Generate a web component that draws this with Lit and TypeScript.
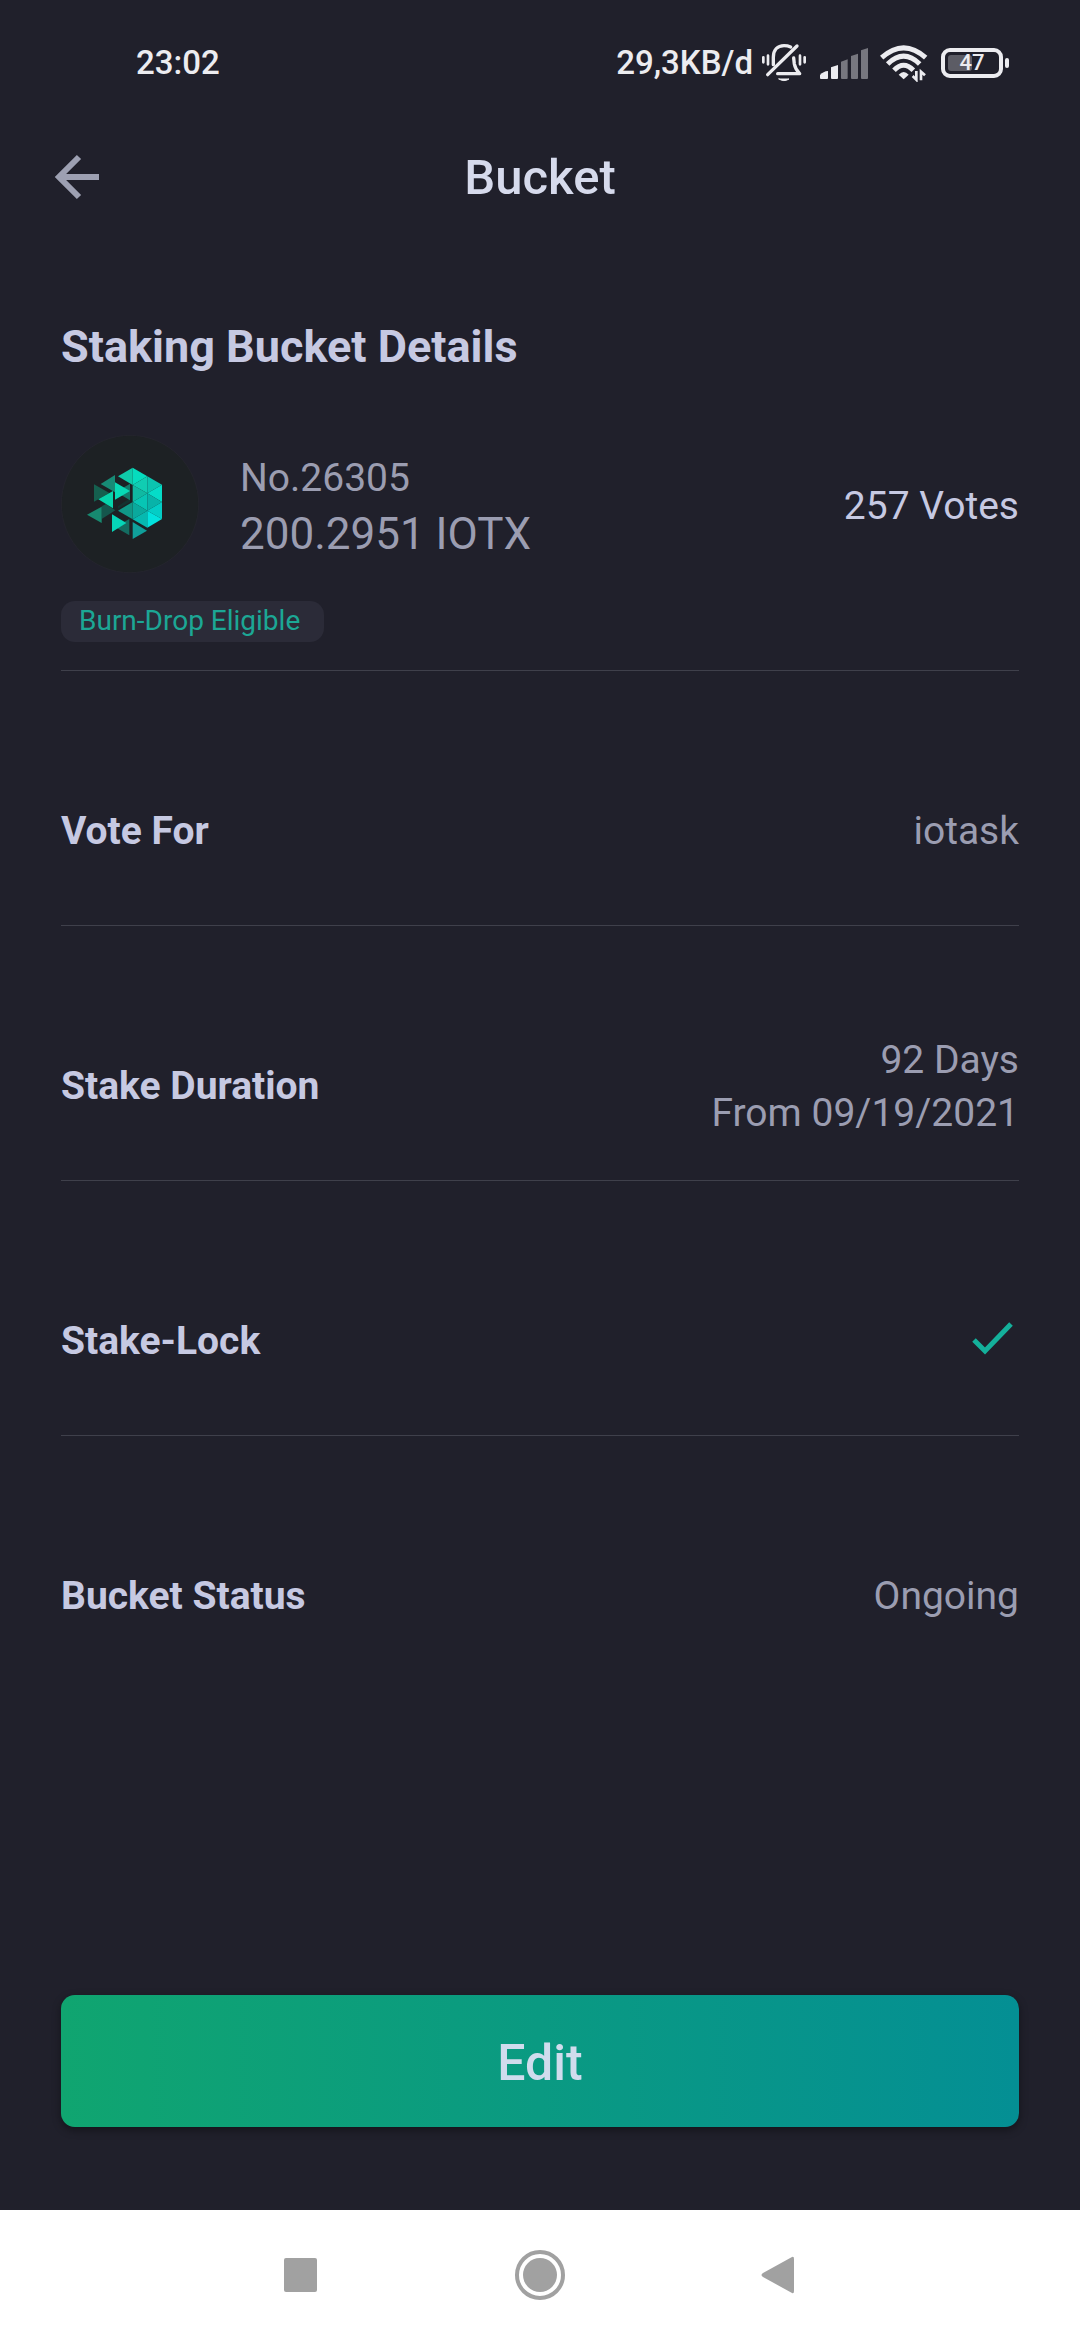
import { LitElement, html, svg, css, nothing, type TemplateResult } from "lit";
import { customElement, property } from "lit/decorators.js";

/* Facets of the token logo: polygon points and fill colour. */
const FACETS: [string, string][] = [
  ["204,243 240,220 240,231 204,251", "#14312f"],
  ["155,244 168,237 196,256 155,282", "#15564c"],
  ["132,178 178,204 132,230", "#15604f"],
  ["152,177 195,150 195,202", "#178b76"],
  ["240,176 240,226 198,201", "#127a6a"],
  ["195,172 240,198 195,224", "#07d9b5"],
  ["145,223 189,198 189,250", "#07d3ab"],
  ["111,269 155,245 155,294", "#178a70"],
  ["238,282 238,331 195,306", "#146c61"],
  ["186,268 229,294 186,321", "#06d5b8"],
  ["248,291 291,317 248,342", "#109f9a"],
  ["204,154 248,128 248,180", "#0fcbaa"],
  ["248,128 292,154 248,180", "#05dcbe"],
  ["292,154 292,205 248,180", "#10cdb2"],
  ["292,154 336,179 292,205", "#0bc5b0"],
  ["336,179 336,231 292,205", "#05dcc8"],
  ["248,180 292,205 248,231", "#10b9a2"],
  ["292,205 292,257 248,231", "#07c5b4"],
  ["292,205 336,231 292,257", "#08b3a9"],
  ["336,231 336,282 292,257", "#04cdc6"],
  ["248,231 292,257 248,283", "#0aa99d"],
  ["292,257 292,308 248,283", "#06b9b0"],
  ["292,257 336,282 292,308", "#02e2de"],
  ["204,257 248,231 248,283", "#109888"],
];

@customElement("status-bar")
export class StatusBar extends LitElement {
  static styles = css`
    :host {
      display: flex;
      align-items: center;
      justify-content: space-between;
      height: 126px;
      padding: 0 71px 0 136px;
      color: #ececf0;
      font-size: 33px;
      font-weight: 500;
      line-height: 40px;
    }
    .right {
      display: flex;
      align-items: center;
    }
    .bell {
      width: 46px;
      height: 40px;
      margin-left: 8px;
    }
    .signal {
      width: 48px;
      height: 31px;
      margin-left: 13px;
    }
    .wifi {
      width: 48px;
      height: 38px;
      margin-left: 12px;
    }
    .battery {
      position: relative;
      display: flex;
      align-items: center;
      justify-content: center;
      box-sizing: border-box;
      width: 62px;
      height: 30px;
      margin-left: 13px;
      border: 4px solid #ececf0;
      border-radius: 9px;
      font-size: 22px;
      line-height: 22px;
    }
    .level {
      position: absolute;
      left: 3px;
      top: 3px;
      bottom: 3px;
      width: 24px;
      border-radius: 3px;
      background: #5c5c65;
    }
    .percent {
      position: relative;
    }
    .nub {
      width: 4px;
      height: 10px;
      margin-left: 2px;
      border-radius: 2px;
      background: #ececf0;
    }
  `;

  render() {
    return html`
      <span>23:02</span>
      <div class="right">
        <span>29,3KB/d</span>
        <svg class="bell" viewBox="480 39 138 120" fill="none" stroke="#ececf0" stroke-width="10" stroke-linecap="round" aria-hidden="true">
          <path d="M500 134 588 48" />
          <path d="M517 104V82C517 60 530 47 549 47Q560 47 569 51" />
          <path d="M530 131H596Q583 118 580 102L578 84" stroke-linejoin="round" />
          <path d="M534 147H564Q549 157 534 147Z" fill="#ececf0" stroke-width="3" />
          <path d="M487 82V97M501 77V103M597 77V103M611 82V97" stroke-width="8" />
        </svg>
        <svg class="signal" viewBox="57 51 144 93" aria-hidden="true">
          <g fill="#ececf0">
            <path d="M57 141V132Q67 121 81 120V141Q81 144 78 144H60Q57 144 57 141Z" />
            <path d="M90 141V109L111 102V141Q111 144 108 144H93Q90 144 90 141Z" />
          </g>
          <g fill="#77777f">
            <path d="M120 141V92L140 85V141Q140 144 137 144H123Q120 144 120 141Z" />
            <path d="M150 141V75L171 68V141Q171 144 168 144H153Q150 144 150 141Z" />
            <path d="M180 141V58L201 51V141Q201 144 198 144H183Q180 144 180 141Z" />
          </g>
        </svg>
        <svg class="wifi" viewBox="238 42 144 114" fill="none" stroke="#ececf0" stroke-width="15" aria-hidden="true">
          <path d="M243 83Q309 24 375 83" />
          <path d="M261 102Q309 55 357 102" />
          <path d="M280 121Q309 91 338 121" />
          <path d="M294 134Q309 118 324 134L309 148Z" fill="#ececf0" stroke="none" />
          <path d="M347 123V149L336 138M361 151V125L373 136" stroke-width="8" />
        </svg>
        <div class="battery"><span class="level"></span><span class="percent">47</span></div>
        <span class="nub"></span>
      </div>
    `;
  }
}

@customElement("detail-row")
export class DetailRow extends LitElement {
  @property() label = "";
  @property({ attribute: false }) lines: string[] = [];
  @property({ type: Boolean }) checked = false;

  static styles = css`
    :host {
      display: flex;
      align-items: center;
      justify-content: space-between;
      box-sizing: border-box;
      min-height: 255px;
      padding-top: 67px;
      font-size: 39px;
      line-height: 53px;
      border-bottom: 1px solid #3f404b;
    }
    :host(:last-of-type) {
      border-bottom-color: transparent;
    }
    .label {
      color: #c6c9e2;
      font-weight: 700;
    }
    .value {
      color: #9b9db1;
      text-align: right;
    }
    .tick {
      display: block;
      width: 54px;
      height: 54px;
    }
  `;

  render() {
    return html`
      <span class="label">${this.label}</span>
      <div class="value">
        ${this.lines.map((line) => html`<div>${line}</div>`)}
        ${this.checked
          ? html`<svg class="tick" viewBox="0 0 54 54" fill="none" stroke="#14b09b" stroke-width="5" role="img" aria-label="Yes">
              <path d="M9 25 20 36 46 9" />
            </svg>`
          : nothing}
      </div>
    `;
  }
}

@customElement("app-root")
export class AppRoot extends LitElement {
  static styles = css`
    :host {
      display: flex;
      flex-direction: column;
      min-height: 100vh;
      background: #20202b;
      font-family: Roboto, "Liberation Sans", sans-serif;
    }
    button {
      padding: 0;
      border: 0;
      background: none;
      font-family: inherit;
      cursor: pointer;
    }
    svg {
      display: block;
    }
    .header {
      display: grid;
      grid-template-columns: 48px 1fr 48px;
      align-items: center;
      height: 104px;
      padding: 0 52px;
    }
    .back svg {
      width: 48px;
      height: 48px;
    }
    .title {
      margin: 0;
      color: #d6daec;
      font-size: 49px;
      font-weight: 500;
      line-height: 56px;
      text-align: center;
    }
    .content {
      display: flex;
      flex: 1;
      flex-direction: column;
      padding: 91px 61px 83px;
    }
    .heading {
      margin: 0;
      color: #c6c9e2;
      font-size: 45px;
      font-weight: 700;
      line-height: 52px;
    }
    .summary {
      display: flex;
      align-items: center;
      margin-top: 62px;
    }
    .logo {
      width: 138px;
      height: 138px;
    }
    .amounts {
      flex: 1;
      padding: 4px 0 0 41px;
      color: #9b9db1;
      font-size: 44px;
      line-height: 56px;
    }
    .number {
      font-size: 39px;
    }
    .votes {
      padding-top: 4px;
      color: #c6c9e2;
      font-size: 39px;
      line-height: 56px;
    }
    .tag-line {
      display: flex;
      padding: 28px 0;
      border-bottom: 1px solid #3f404b;
    }
    .tag {
      padding: 0 24px 2px 18px;
      border-radius: 14px;
      background: #2b2b38;
      color: #1ca795;
      font-size: 28px;
      line-height: 39px;
    }
    .edit {
      height: 132px;
      margin-top: auto;
      padding-top: 4px;
      border-radius: 14px;
      background: linear-gradient(90deg, #10a570, #048f94);
      box-shadow: 0 3px 8px rgba(0, 0, 0, 0.4);
      color: #d0dced;
      font-size: 50px;
      font-weight: 500;
    }
    .nav {
      display: flex;
      align-items: center;
      justify-content: center;
      gap: 184px;
      height: 130px;
      background: #fff;
    }
    .nav svg {
      width: 54px;
      height: 54px;
      fill: #a1a1a1;
    }
  `;

  private logo(): TemplateResult {
    return html`<svg class="logo" viewBox="33 30 414 414" role="img" aria-label="IoTeX">
      <circle cx="240" cy="237" r="206" fill="#1d2124" stroke="#272730" stroke-width="2" />
      ${FACETS.map(([points, fill]) => svg`<polygon points=${points} fill=${fill} />`)}
    </svg>`;
  }

  render() {
    return html`
      <status-bar></status-bar>
      <header class="header">
        <button class="back" aria-label="Back">
          <svg viewBox="0 0 48 48" fill="none" stroke="#9da0b2" stroke-width="6">
            <path d="M47 23H9M27 3 7 23 27 43" />
          </svg>
        </button>
        <h1 class="title">Bucket</h1>
      </header>
      <main class="content">
        <h2 class="heading">Staking Bucket Details</h2>
        <section class="summary">
          ${this.logo()}
          <div class="amounts">
            <div class="number">No.26305</div>
            <div>200.2951 IOTX</div>
          </div>
          <span class="votes">257 Votes</span>
        </section>
        <div class="tag-line"><span class="tag">Burn-Drop Eligible</span></div>
        <detail-row label="Vote For" .lines=${["iotask"]}></detail-row>
        <detail-row label="Stake Duration" .lines=${["92 Days", "From 09/19/2021"]}></detail-row>
        <detail-row label="Stake-Lock" checked></detail-row>
        <detail-row label="Bucket Status" .lines=${["Ongoing"]}></detail-row>
        <button class="edit">Edit</button>
      </main>
      <nav class="nav">
        <button aria-label="Recent apps">
          <svg viewBox="0 0 54 54"><rect x="9" y="10" width="33" height="34" rx="2" /></svg>
        </button>
        <button aria-label="Home">
          <svg viewBox="0 0 54 54">
            <circle cx="27" cy="27" r="17" />
            <circle cx="27" cy="27" r="23" fill="none" stroke="#a1a1a1" stroke-width="4" />
          </svg>
        </button>
        <button aria-label="Back">
          <svg viewBox="0 0 54 54"><path d="M12 25 41 9Q43 8 43 11V43Q43 46 41 45L12 29Q9 27 12 25Z" /></svg>
        </button>
      </nav>
    `;
  }
}
